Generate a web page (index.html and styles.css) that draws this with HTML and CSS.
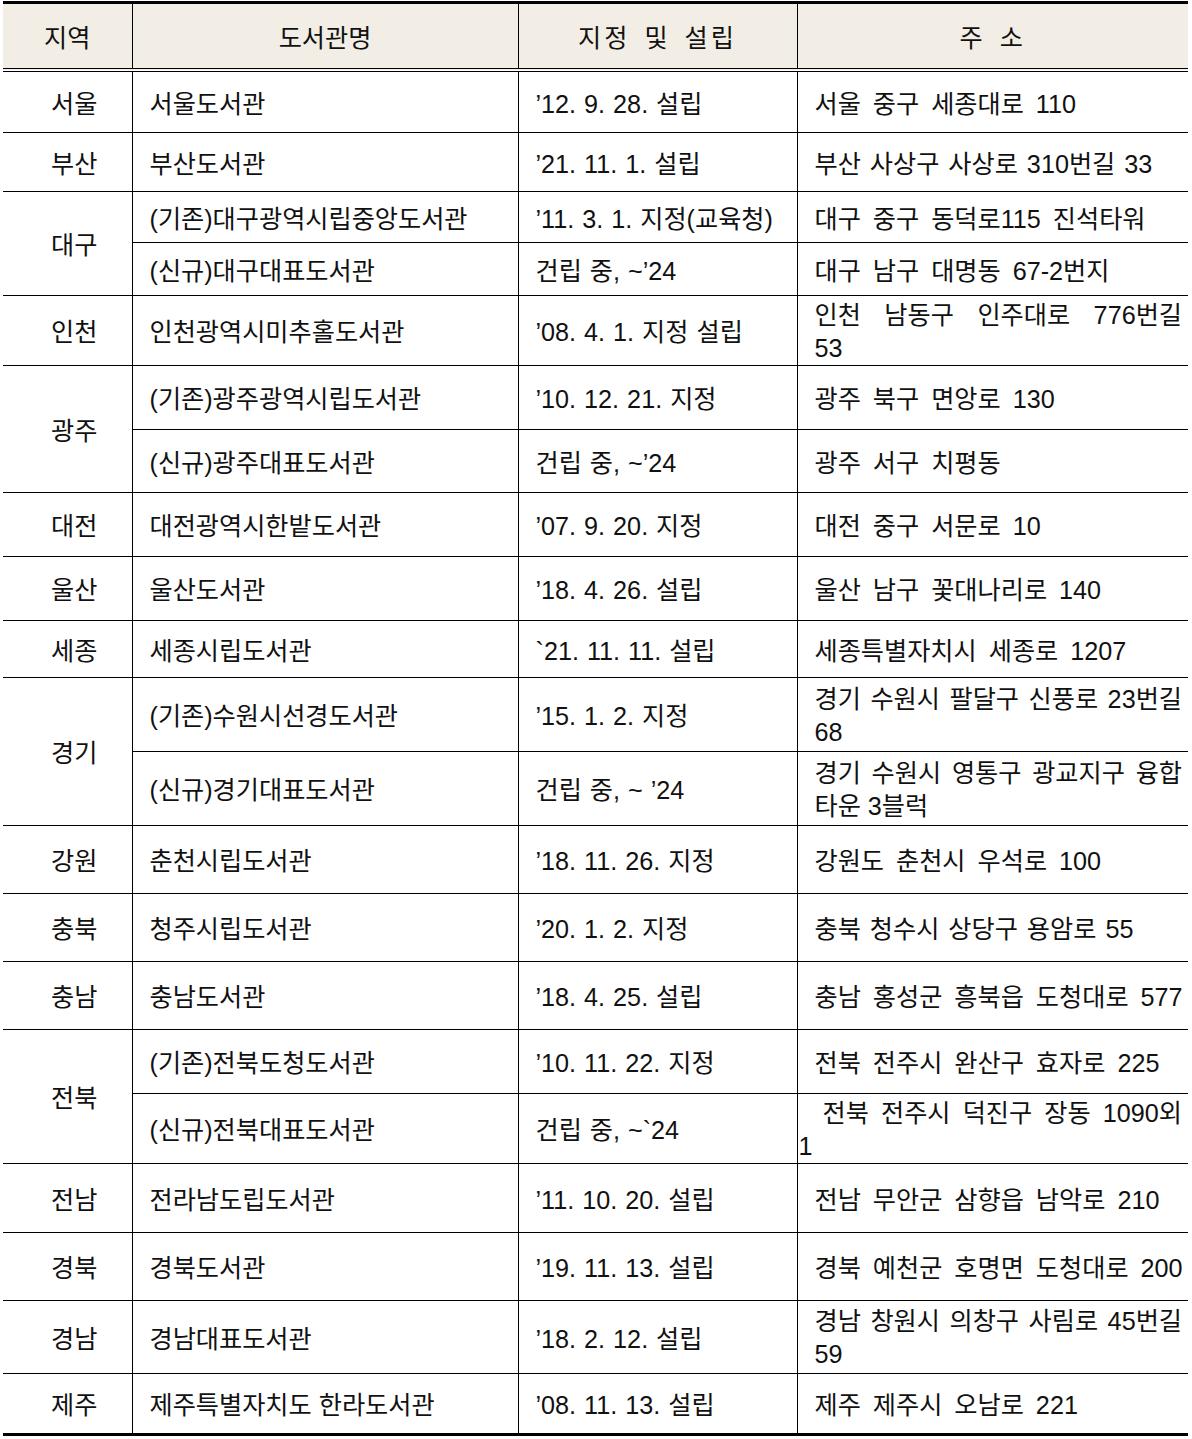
FILE: index.html
```html
<!DOCTYPE html>
<html lang="ko">
<head>
<meta charset="utf-8">
<link rel="stylesheet" href="styles.css">
</head>
<body>
<div class="wrap">
<table class="lib">
<colgroup>
<col class="c-region"><col class="c-name"><col class="c-date"><col class="c-addr">
</colgroup>
<thead>
<tr class="head">
<th>지역</th><th>도서관명</th><th class="spaced">지정 및 설립</th><th class="spaced">주 소</th>
</tr>
</thead>
<tbody>
<tr class="h62"><td class="region">서울</td><td>서울도서관</td><td class="date">’12. 9. 28. 설립</td><td class="addr">서울 중구 세종대로 110</td></tr>
<tr class="h59"><td class="region">부산</td><td>부산도서관</td><td class="date">’21. 11. 1. 설립</td><td class="addr tight">부산 사상구 사상로 310번길 33</td></tr>
<tr class="h51"><td class="region" rowspan="2">대구</td><td>(기존)대구광역시립중앙도서관</td><td class="date">’11. 3. 1. 지정(교육청)</td><td class="addr">대구 중구 동덕로115 진석타워</td></tr>
<tr class="h53"><td>(신규)대구대표도서관</td><td class="date">건립 중, ~’24</td><td class="addr">대구 남구 대명동 67-2번지</td></tr>
<tr class="h70"><td class="region">인천</td><td>인천광역시미추홀도서관</td><td class="date">’08. 4. 1. 지정 설립</td><td class="addr wrapcell"><span class="ln1">인천 남동구 인주대로 776번길</span><span class="ln2">53</span></td></tr>
<tr class="h64"><td class="region" rowspan="2">광주</td><td>(기존)광주광역시립도서관</td><td class="date">’10. 12. 21. 지정</td><td class="addr">광주 북구 면앙로 130</td></tr>
<tr class="h63"><td>(신규)광주대표도서관</td><td class="date">건립 중, ~’24</td><td class="addr">광주 서구 치평동</td></tr>
<tr class="h64"><td class="region">대전</td><td>대전광역시한밭도서관</td><td class="date">’07. 9. 20. 지정</td><td class="addr">대전 중구 서문로 10</td></tr>
<tr class="h64"><td class="region">울산</td><td>울산도서관</td><td class="date">’18. 4. 26. 설립</td><td class="addr">울산 남구 꽃대나리로 140</td></tr>
<tr class="h57"><td class="region">세종</td><td>세종시립도서관</td><td class="date">`21. 11. 11. 설립</td><td class="addr">세종특별자치시 세종로 1207</td></tr>
<tr class="h74"><td class="region" rowspan="2">경기</td><td>(기존)수원시선경도서관</td><td class="date">’15. 1. 2. 지정</td><td class="addr wrapcell"><span class="ln1">경기 수원시 팔달구 신풍로 23번길</span><span class="ln2">68</span></td></tr>
<tr class="h74"><td>(신규)경기대표도서관</td><td class="date">건립 중, ~ ’24</td><td class="addr wrapcell"><span class="ln1">경기 수원시 영통구 광교지구 융합</span><span class="ln2">타운 3블럭</span></td></tr>
<tr class="h68"><td class="region">강원</td><td>춘천시립도서관</td><td class="date">’18. 11. 26. 지정</td><td class="addr">강원도 춘천시 우석로 100</td></tr>
<tr class="h68"><td class="region">충북</td><td>청주시립도서관</td><td class="date">’20. 1. 2. 지정</td><td class="addr tight">충북 청수시 상당구 용암로 55</td></tr>
<tr class="h68"><td class="region">충남</td><td>충남도서관</td><td class="date">’18. 4. 25. 설립</td><td class="addr">충남 홍성군 흥북읍 도청대로 577</td></tr>
<tr class="h64"><td class="region" rowspan="2">전북</td><td>(기존)전북도청도서관</td><td class="date">’10. 11. 22. 지정</td><td class="addr">전북 전주시 완산구 효자로 225</td></tr>
<tr class="h69"><td>(신규)전북대표도서관</td><td class="date">건립 중, ~`24</td><td class="addr wrapcell"><span class="ln1 indent">전북 전주시 덕진구 장동 1090외</span><span class="ln2 outdent">1</span></td></tr>
<tr class="h69"><td class="region">전남</td><td>전라남도립도서관</td><td class="date">’11. 10. 20. 설립</td><td class="addr">전남 무안군 삼향읍 남악로 210</td></tr>
<tr class="h68"><td class="region">경북</td><td>경북도서관</td><td class="date">’19. 11. 13. 설립</td><td class="addr">경북 예천군 호명면 도청대로 200</td></tr>
<tr class="h73"><td class="region">경남</td><td>경남대표도서관</td><td class="date">’18. 2. 12. 설립</td><td class="addr wrapcell"><span class="ln1">경남 창원시 의창구 사림로 45번길</span><span class="ln2">59</span></td></tr>
<tr class="h61 last"><td class="region">제주</td><td>제주특별자치도 한라도서관</td><td class="date">’08. 11. 13. 설립</td><td class="addr">제주 제주시 오남로 221</td></tr>
</tbody>
</table>
</div>
</body>
</html>
```

FILE: styles.css
```css
html, body {
  margin: 0;
  padding: 0;
  background: #ffffff;
}

.wrap {
  padding: 1px 4px 0 3px;
}

.lib {
  width: 1185px;
  border-collapse: collapse;
  table-layout: fixed;
  font-family: "Liberation Sans", "Noto Sans CJK KR", sans-serif;
  font-size: 25.2px;
  color: #111111;
  border-top: 3px solid #000000;
  border-bottom: 3px solid #000000;
}

.c-region { width: 129px; }
.c-name { width: 386px; }
.c-date { width: 279px; }
.c-addr { width: 391px; }

.lib th,
.lib td {
  border: 1px solid #000000;
  padding: 0 6px 0 17px;
  vertical-align: middle;
  text-align: left;
  white-space: nowrap;
  font-weight: 400;
}

.lib td.date {
  word-spacing: 1px;
}

.lib td.addr {
  word-spacing: 5px;
}

.lib td.addr.tight {
  word-spacing: 2px;
}

.lib tr > :first-child { border-left: none; }
.lib tr > :last-child { border-right: none; }
.lib td.region { border-right: 1px solid #000000; }

.lib .head th {
  background: #f2eee5;
  text-align: center;
  padding: 0;
  height: 64px;
  border-top: none;
  border-bottom: 4px double #000000;
}

.lib .head th.spaced {
  letter-spacing: 3px;
  word-spacing: 4px;
}

.lib td.region {
  text-align: center;
  padding: 0 0 0 14px;
}

.lib td.wrapcell {
  white-space: normal;
  word-spacing: 0;
  line-height: 33px;
  padding-top: 3px;
}

.ln1 {
  display: block;
  text-align: justify;
  text-align-last: justify;
}

.ln2 {
  display: block;
}

.indent {
  padding-left: 8px;
}

.outdent {
  margin-left: -16px;
}

.h51 { height: 51px; }
.h53 { height: 53px; }
.h57 { height: 57px; }
.h59 { height: 59px; }
.h61 { height: 61px; }
.h62 { height: 62px; }
.h63 { height: 63px; }
.h64 { height: 64px; }
.h68 { height: 68px; }
.h69 { height: 69px; }
.h70 { height: 70px; }
.h73 { height: 73px; }
.h74 { height: 74px; }

.lib tr.last td { border-bottom: none; }
```
